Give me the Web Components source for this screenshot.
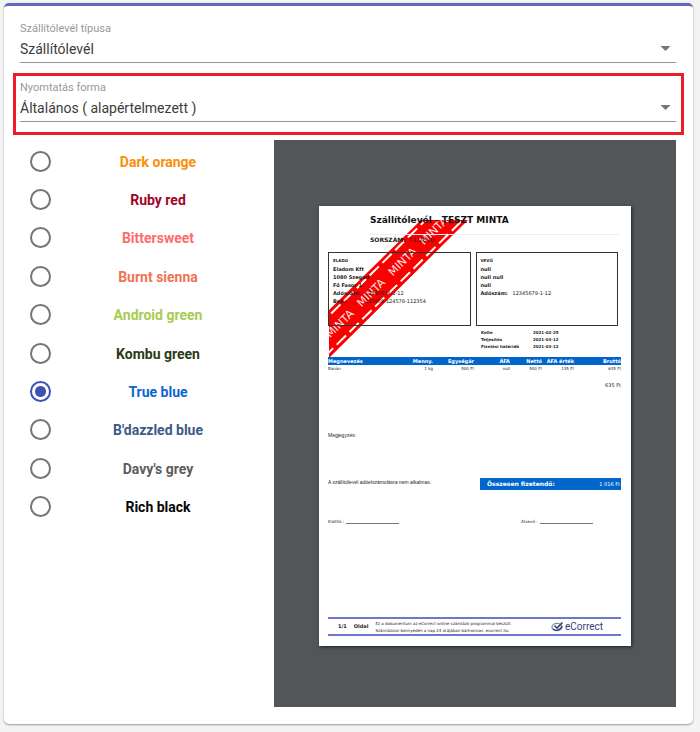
<!DOCTYPE html>
<html lang="hu">
<head>
	<meta charset="utf-8">
	<title>Szállítólevél</title>
	<meta name="viewport" content="width=device-width">
</head>
<style>
body {
	margin:0;
	padding:3px 7px 8px 4px;
	background-color:#f4f4f4;
	font-family:Roboto, 'Liberation Sans', sans-serif;
	color:#424242;
}
</style>
<body>
<print-card>
	<select-field label="Szállítólevél típusa" value="Szállítólevél"></select-field>
	<select-field label="Nyomtatás forma" value="Általános ( alapértelmezett )" highlight></select-field>
	<color-list slot="options"></color-list>
	<document-preview slot="preview">
		<invoice-page></invoice-page>
	</document-preview>
</print-card>
</body>

<script type="text/javascript">
const colors = [
	['Dark orange', '#f98f07'],
	['Ruby red', '#a00528'],
	['Bittersweet', '#ff6b6b'],
	['Burnt sienna', '#ef7353'],
	['Android green', '#a7cc55'],
	['Kombu green', '#2a3a17'],
	['True blue', '#0a66d0'],
	["B'dazzled blue", '#3d5a88'],
	["Davy's grey", '#5c5c5c'],
	['Rich black', '#050708']
]

// card with the two selects on top and two columns below
customElements.define('print-card', class extends HTMLElement {
	constructor() {
		super()
		this.attachShadow({mode:'open'}).innerHTML=`
		<style>
		:host {
			display:block;
			background-color:white;
			border-top:3px solid #6067c4;
			border-radius:5px;
			padding:15px 17px 17px 16px;
			box-shadow:0 1px 2px #999;
		}
		.columns {
			display:grid;
			grid-template-columns:254px 1fr;
			margin-top:5px;
		}
		</style>
		<slot></slot>
		<div class='columns'>
			<slot name='options'></slot>
			<slot name='preview'></slot>
		</div>
		`
	}
})

customElements.define('select-field', class extends HTMLElement {
	constructor() {
		super()
		this.attachShadow({mode:'open'}).innerHTML=`
		<style>
		:host {
			display:block;
		}
		:host([highlight]) {
			margin:10px -8px 0 -7px;
			padding:4px 5px 10px 4px;
			border:3px solid #ee1c25;
		}
		label {
			display:block;
			font-size:11px;
			line-height:16px;
			color:#999;
		}
		.control {
			display:flex;
			align-items:center;
			padding-bottom:2px;
			border-bottom:1px solid #949494;
		}
		select {
			appearance:none;
			flex:1;
			min-width:0;
			height:23px;
			margin:0;
			padding:0;
			border:0;
			outline:0;
			background:none;
			font-family:inherit;
			font-size:14px;
			color:#3c3c3c;
		}
		svg {
			width:11px;
			height:5px;
			margin-right:5px;
			fill:#757575;
		}
		</style>
		<label for='field'></label>
		<div class='control'>
			<select id='field'><option></option></select>
			<svg viewBox='0 0 10 5'><path d='M0 0H10L5 5Z'/></svg>
		</div>
		`
	}
	connectedCallback() {
		this.shadowRoot.querySelector('label').textContent = this.getAttribute('label')
		this.shadowRoot.querySelector('option').textContent = this.getAttribute('value')
	}
})

customElements.define('color-list', class extends HTMLElement {
	constructor() {
		super()
		this.attachShadow({mode:'open'}).innerHTML=`
		<style>
		:host {
			display:block;
			padding-top:2px;
		}
		.list {
			display:grid;
			grid-auto-rows:1fr;
			height:384px;
		}
		.row {
			display:grid;
			grid-template-columns:40px 196px;
			align-items:center;
		}
		input {
			appearance:none;
			box-sizing:border-box;
			width:21px;
			height:21px;
			margin:0 0 0 10px;
			border:2px solid #757575;
			border-radius:50%;
		}
		input:checked {
			border-color:#3f51b5;
			background:radial-gradient(circle, #3f51b5 5px, white 6px);
		}
		label {
			padding-top:1px;
			font-size:14px;
			font-weight:700;
			line-height:20px;
			text-align:center;
		}
		</style>
		<div class='list'></div>
		`
		const list = this.shadowRoot.querySelector('.list')
		colors.forEach(function(item, i){
			const row = document.createElement('div')
			row.setAttribute('class','row')
			row.innerHTML="<input type='radio' name='color' id='c"+i+"'><label for='c"+i+"'></label>"
			row.querySelector('label').textContent = item[0]
			row.querySelector('label').style.color = item[1]
			row.querySelector('input').checked = item[0]=='True blue'
			list.appendChild(row)
		})
	}
})

// grey pdf viewer area
customElements.define('document-preview', class extends HTMLElement {
	constructor() {
		super()
		this.attachShadow({mode:'open'}).innerHTML=`
		<style>
		:host {
			display:flex;
			justify-content:center;
			align-items:flex-start;
			padding:66px 0 61px;
			background-color:#525659;
		}
		</style>
		<slot></slot>
		`
	}
})

customElements.define('party-box', class extends HTMLElement {
	constructor() {
		super()
		this.attachShadow({mode:'open'}).innerHTML=`
		<style>
		:host {
			display:block;
			box-sizing:border-box;
			flex:1;
			height:74px;
			padding:4px;
			border:1px solid #333;
			font-size:5px;
			line-height:8px;
			font-weight:700;
			white-space:nowrap;
		}
		.role {
			font-size:4px;
		}
		</style>
		<div class='role'></div>
		<slot></slot>
		`
	}
	connectedCallback() {
		this.shadowRoot.querySelector('.role').textContent = this.getAttribute('role-name')
	}
})

// red diagonal ribbon
customElements.define('sample-ribbon', class extends HTMLElement {
	constructor() {
		super()
		this.attachShadow({mode:'open'}).innerHTML=`
		<style>
		:host {
			display:block;
		}
		svg {
			display:block;
			width:100%;
			height:100%;
		}
		text {
			font-family:'DejaVu Sans', sans-serif;
			font-size:11px;
			fill:#ffe9e9;
			text-anchor:middle;
		}
		</style>
		<svg viewBox='0 0 139 138'>
			<path d='M92 0H139L0 138V90Z' fill='#fb0000'/>
			<g transform='translate(0 114) rotate(-44.7)'>
				<path d='M-20 -13H180M-20 13H180' stroke='white' stroke-width='2' stroke-dasharray='13 5'/>
				<text x='15' y='4'>MINTA</text>
				<text x='59' y='4'>MINTA</text>
				<text x='103' y='4'>MINTA</text>
				<text x='147' y='4'>MINTA</text>
			</g>
		</svg>
		`
	}
})

customElements.define('ecorrect-logo', class extends HTMLElement {
	constructor() {
		super()
		this.attachShadow({mode:'open'}).innerHTML=`
		<style>
		:host {
			display:flex;
			align-items:center;
			gap:1px;
			font-family:Roboto, sans-serif;
			font-size:10px;
			line-height:12px;
			color:#3b3b78;
		}
		svg {
			width:13px;
			height:11px;
		}
		</style>
		<svg viewBox='0 0 13 11' fill='none'>
			<ellipse cx='6' cy='6' rx='5' ry='3.6' stroke='#7398b4' stroke-width='1.4'/>
			<path d='M2 8C4 10 9 10 11 5' stroke='#3b3b78' stroke-width='1.2'/>
			<path d='M3.5 4.5L6 7L11.5 1.5' stroke='#3b3b78' stroke-width='1.6'/>
		</svg>
		<span>eCorrect</span>
		`
	}
})

customElements.define('invoice-page', class extends HTMLElement {
	constructor() {
		super()
		this.attachShadow({mode:'open'}).innerHTML=`
		<style>
		:host {
			display:flex;
			flex-direction:column;
			box-sizing:border-box;
			position:relative;
			isolation:isolate;
			width:312px;
			min-height:440px;
			padding:9px 10px 10px 9px;
			background-color:white;
			box-shadow:1px 1px 3px #222;
			font-family:'DejaVu Sans', sans-serif;
			font-size:5px;
			line-height:8px;
			color:#222;
		}
		sample-ribbon {
			position:absolute;
			z-index:-1;
			left:10px;
			top:14px;
			width:139px;
			height:138px;
		}
		header {
			margin:0 2px 0 42px;
		}
		h1 {
			margin:0;
			padding-bottom:9px;
			border-bottom:1px solid #e4eef8;
			font-size:9px;
			line-height:10px;
			color:#111;
		}
		.serial {
			margin-top:1px;
			font-size:6px;
		}
		.parties {
			display:flex;
			gap:5px;
			margin:8px 3px 0 0;
		}
		.parties span {
			display:inline-block;
			min-width:32px;
		}
		.parties i {
			font-style:normal;
			font-weight:400;
		}
		dl {
			display:grid;
			grid-template-columns:52px 1fr;
			margin:3px 0 0 153px;
			font-size:4px;
			line-height:7px;
			font-weight:700;
		}
		dd {
			margin:0;
		}
		table {
			width:100%;
			margin-top:7px;
			border-collapse:collapse;
			table-layout:fixed;
			font-size:4px;
			line-height:7px;
			white-space:nowrap;
		}
		th, td {
			padding:0;
			text-align:right;
		}
		th:first-child, td:first-child {
			text-align:left;
		}
		th {
			background-color:#0066cc;
			color:white;
			font-size:5px;
			line-height:8px;
		}
		.sum {
			margin-top:9px;
			text-align:right;
		}
		.plain {
			font-family:'Liberation Sans', sans-serif;
		}
		.note {
			margin-top:42px;
		}
		.total {
			display:flex;
			justify-content:space-between;
			align-items:flex-start;
			margin-top:39px;
		}
		.bar {
			display:flex;
			justify-content:space-between;
			box-sizing:border-box;
			width:141px;
			padding:0 1px 0 7px;
			background-color:#0066cc;
			color:white;
			line-height:12px;
		}
		.bar b {
			font-size:6px;
		}
		.signs {
			display:grid;
			grid-template-columns:193px 1fr;
			margin-top:28px;
			font-size:4px;
		}
		.signs div {
			display:flex;
			gap:2px;
		}
		.signs div::after {
			content:'';
			width:53px;
			height:5px;
			border-bottom:1px solid #777;
		}
		footer {
			display:flex;
			align-items:center;
			box-sizing:border-box;
			height:19px;
			margin-top:auto;
			padding:0 18px 0 10px;
			border-top:2px solid #6b78cc;
			border-bottom:2px solid #6b78cc;
			font-size:4px;
			line-height:7px;
		}
		footer b {
			font-size:5px;
			margin-right:7px;
		}
		footer p {
			margin:0;
			white-space:nowrap;
		}
		ecorrect-logo {
			margin-left:auto;
		}
		</style>
		<sample-ribbon></sample-ribbon>
		<header>
			<h1>Szállítólevél - TESZT MINTA</h1>
			<div class='serial'><b>SORSZÁM:</b> T-1/2020</div>
		</header>
		<div class='parties'>
			<party-box role-name='ELADÓ'>
				<div>Eladom Kft</div>
				<div>1080 Szeged</div>
				<div>Fő Fasor 1.</div>
				<div><span>Adószám:</span><i>12345678-1-12</i></div>
				<div><span>Bsz.:</span><i>123456-124578-112354</i></div>
			</party-box>
			<party-box role-name='VEVŐ'>
				<div>null</div>
				<div>null null</div>
				<div>null</div>
				<div><span>Adószám:</span><i>12345679-1-12</i></div>
			</party-box>
		</div>
		<dl>
			<dt>Kelte</dt><dd>2021-02-25</dd>
			<dt>Teljesítés</dt><dd>2021-03-12</dd>
			<dt>Fizetési határidő</dt><dd>2021-03-12</dd>
		</dl>
		<table>
			<colgroup>
				<col style='width:64px'><col style='width:41px'><col style='width:41px'><col style='width:36px'><col style='width:32px'><col style='width:32px'><col>
			</colgroup>
			<tr><th>Megnevezés</th><th>Menny.</th><th>Egységár</th><th>ÁFA</th><th>Nettó</th><th>ÁFA érték</th><th>Bruttó</th></tr>
			<tr><td>Banán</td><td>1 kg</td><td>500 Ft</td><td>null</td><td>500 Ft</td><td>135 Ft</td><td>635 Ft</td></tr>
		</table>
		<div class='sum'>635 Ft</div>
		<div class='note plain'>Megjegyzés:</div>
		<div class='total'>
			<span class='plain'>A szállítólevél adóelszámolásra nem alkalmas.</span>
			<div class='bar'><b>Összesen fizetendő:</b><span>1 016 Ft</span></div>
		</div>
		<div class='signs'><div>Kiállító :</div><div>Átvevő :</div></div>
		<footer>
			<b>1/1</b><b>Oldal</b>
			<p>Ez a dokumentum az eCorrect online számlázó programmal készült.<br>Számlázzon könnyedén a nap 24 órájában bárhonnan. ecorrect.hu</p>
			<ecorrect-logo></ecorrect-logo>
		</footer>
		`
	}
})
</script>
</html>
